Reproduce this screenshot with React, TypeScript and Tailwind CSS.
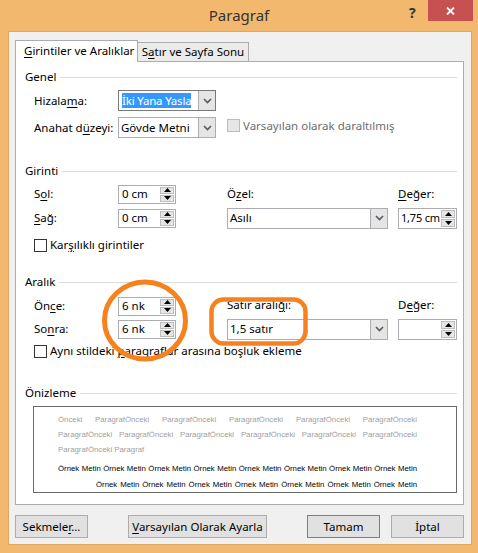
import React from "react";

const U = ({ c }: { c: string }) => (
  <span className="underline underline-offset-[2px] decoration-[1px]">{c}</span>
);

const Tri = ({ up }: { up?: boolean }) => (
  <svg width="7" height="4" viewBox="0 0 7 4">
    {up ? <path d="M0 4 L3.5 0 L7 4 Z" fill="#000" /> : <path d="M0 0 L3.5 4 L7 0 Z" fill="#000" />}
  </svg>
);

const Spin = ({ value, tall }: { value: string; tall?: boolean }) => (
  <div
    className={
      tall
        ? "h-[21px] w-full bg-white border border-[#ABADB3] flex items-stretch"
        : "h-[19px] w-full bg-white border border-[#ABADB3] flex items-stretch"
    }
  >
    <div
      className={
        tall
          ? "flex-1 pl-[2px] flex items-center whitespace-nowrap overflow-hidden text-[11px] tracking-[-0.2px]"
          : "flex-1 pl-[3px] flex items-center whitespace-nowrap overflow-hidden"
      }
    >
      {value}
    </div>
    <div className="w-[16px] flex flex-col gap-px p-px">
      <div className="flex-1 bg-[#E6E6E6] border border-[#BDBDBD] flex items-center justify-center">
        <Tri up />
      </div>
      <div className="flex-1 bg-[#E6E6E6] border border-[#BDBDBD] flex items-center justify-center">
        <Tri />
      </div>
    </div>
  </div>
);

const Chevron = () => (
  <svg width="9" height="6" viewBox="0 0 9 6">
    <path d="M1 1 L4.5 4.5 L8 1" stroke="#5A5A5A" strokeWidth="1.6" fill="none" />
  </svg>
);

const Select = ({ children, dark }: { children: React.ReactNode; dark?: boolean }) => (
  <div
    className={
      dark
        ? "h-[21px] w-full bg-white border border-[#7A7A7A] flex items-stretch"
        : "h-[21px] w-full bg-white border border-[#ABADB3] flex items-stretch"
    }
  >
    <div className="flex-1 pl-[2px] flex items-center whitespace-nowrap overflow-hidden">{children}</div>
    <div className="w-[17px] bg-[#E5E5E5] border-l border-[#ABADB3] flex items-center justify-center">
      <Chevron />
    </div>
  </div>
);

const Heading = ({ children, cls }: { children: React.ReactNode; cls: string }) => (
  <div className={"flex items-center h-[16px] " + cls}>
    <span>{children}</span>
    <div className="flex-1 h-px bg-[#DCDCDC] ml-[4px]" />
  </div>
);

const Check = ({ disabled }: { disabled?: boolean }) => (
  <div
    className={
      disabled
        ? "w-[13px] h-[13px] bg-[#E6E6E6] border border-[#BCBCBC] shrink-0"
        : "w-[13px] h-[13px] bg-white border border-[#333333] shrink-0"
    }
  />
);

const Btn = ({ children, w, def }: { children: React.ReactNode; w: string; def?: boolean }) => (
  <div
    className={
      (def ? "border-[#3C8CE0] " : "border-[#ADADAD] ") +
      w +
      " h-[23px] bg-[#E1E1E1] border flex items-center justify-center whitespace-nowrap"
    }
  >
    {children}
  </div>
);

export default function App() {
  const grey1 = "Önceki ParagrafÖnceki ParagrafÖnceki ParagrafÖnceki ParagrafÖnceki ParagrafÖnceki";
  const grey2 = "ParagrafÖnceki ParagrafÖnceki ParagrafÖnceki ParagrafÖnceki ParagrafÖnceki ParagrafÖnceki";
  const black1 = Array(8).fill("Örnek Metin").join(" ");
  const black2 = Array(7).fill("Örnek Metin").join(" ");

  return (
    <div className="relative w-[478px] h-[553px] bg-[#F2B96E] font-['Noto_Sans',sans-serif] text-[11.5px] leading-[16px] text-black overflow-hidden whitespace-nowrap">
      {/* title bar */}
      <div className="relative h-[31px] flex items-center justify-center">
        <span className="text-[15px] text-[#333333] mt-[-1px]">Paragraf</span>
        <span className="absolute left-[409px] top-[5px] text-[14px] font-bold text-[#333333]">?</span>
        <div className="absolute right-[5px] top-0 w-[45px] h-[21px] bg-[#C75050] flex items-center justify-center">
          <svg width="9" height="8" viewBox="0 0 9 8">
            <path d="M1 0.5 L8 7.5 M8 0.5 L1 7.5" stroke="#fff" strokeWidth="1.8" />
          </svg>
        </div>
      </div>

      {/* client */}
      <div className="ml-[8px] w-[464px] h-[514px] bg-[#F0F0F0] border border-[#DDA862] pl-[6px] pt-[7px]">
        {/* tabs */}
        <div className="flex items-end h-[22px]">
          <div className="relative z-10 w-[123px] h-[22px] -mb-px bg-white border border-b-0 border-[#ACACAC] flex items-center pl-[8px] pb-[1px]">
            <span>
              <U c="G" />
              irintiler ve Aralıklar
            </span>
          </div>
          <div className="w-[111px] h-[19px] bg-[#EBEBEB] border border-l-0 border-b-0 border-[#ACACAC] flex items-center justify-center">
            <span>
              S<U c="a" />
              tır ve Sayfa Sonu
            </span>
          </div>
        </div>

        {/* panel */}
        <div className="w-[449px] h-[444px] bg-white border border-[#ACACAC] pl-[9px] pr-[6px] pt-px">
          <Heading cls="mt-[6px]">Genel</Heading>

          <div className="flex items-center h-[21px] mt-[5px] pl-[9px]">
            <div className="w-[84px]">
              Hizala<U c="m" />a:
            </div>
            <div className="w-[98px]">
              <Select dark>
                <span className="bg-[#3399FF] text-white leading-[15px] ml-[1px] tracking-[-0.2px]">İki Yana Yasla</span>
              </Select>
            </div>
          </div>

          <div className="flex items-center h-[21px] mt-[6px] pl-[9px]">
            <div className="w-[84px]">
              Anahat d<U c="ü" />zeyi:
            </div>
            <div className="w-[98px]">
              <Select>Gövde Metni</Select>
            </div>
            <div className="ml-[11px] flex items-center gap-[3px] text-[#6D6D6D] -mt-[4px]">
              <Check disabled />
              <span>Varsayılan olarak daraltılmış</span>
            </div>
          </div>

          <Heading cls="mt-[25px]">Girinti</Heading>

          <div className="flex items-center h-[24px] mt-[3px] pl-[9px]">
            <div className="w-[84px]">
              S<U c="o" />l:
            </div>
            <div className="w-[58px]">
              <Spin value="0 cm" />
            </div>
            <div className="w-[51px]" />
            <div className="w-[161px]">
              Ö<U c="z" />el:
            </div>
            <div className="w-[10px]" />
            <div className="w-[59px]">
              <U c="D" />eğer:
            </div>
          </div>

          <div className="flex items-center h-[24px] pl-[9px]">
            <div className="w-[84px]">
              <U c="S" />ağ:
            </div>
            <div className="w-[58px]">
              <Spin value="0 cm" />
            </div>
            <div className="w-[51px]" />
            <div className="w-[161px]">
              <Select>Asılı</Select>
            </div>
            <div className="w-[10px]" />
            <div className="w-[59px]">
              <Spin value="1,75 cm" tall />
            </div>
          </div>

          <div className="flex items-center h-[14px] mt-[8px] pl-[9px] gap-[3px]">
            <Check />
            <span>
              Kar<U c="ş" />ılıklı girintiler
            </span>
          </div>

          <Heading cls="mt-[22px]">Aralık</Heading>

          <div className="flex items-center h-[24px] mt-[4px] pl-[9px]">
            <div className="w-[84px]">
              Ön<U c="c" />e:
            </div>
            <div className="w-[58px]">
              <Spin value="6 nk" />
            </div>
            <div className="w-[51px]" />
            <div className="w-[161px] -mt-[3px]">
              Satır aralı<U c="ğ" />ı:
            </div>
            <div className="w-[10px]" />
            <div className="w-[59px] -mt-[3px]">
              D<U c="e" />ğer:
            </div>
          </div>

          <div className="flex items-center h-[22px] pl-[9px]">
            <div className="w-[84px]">
              So<U c="n" />ra:
            </div>
            <div className="w-[58px]">
              <Spin value="6 nk" />
            </div>
            <div className="w-[51px]" />
            <div className="w-[161px]">
              <Select>1,5 satır</Select>
            </div>
            <div className="w-[10px]" />
            <div className="w-[59px]">
              <Spin value="" tall />
            </div>
          </div>

          <div className="flex items-center h-[14px] mt-[4px] pl-[9px] gap-[3px]">
            <Check />
            <span>
              Aynı stildeki <U c="p" />aragraflar arasına boşluk ekleme
            </span>
          </div>

          <Heading cls="mt-[27px]">Önizleme</Heading>

          <div className="ml-[8px] mt-[5px] w-[424px] h-[87px] border border-[#6A6A6A] pl-[24px] pt-[5px] font-['Liberation_Sans',sans-serif] text-[7.8px]">
            <div className="w-[359px] text-[#A0A0A0] leading-[15px] h-[15px] text-justify [text-align-last:justify] whitespace-nowrap">
              {grey1}
            </div>
            <div className="w-[359px] text-[#A0A0A0] leading-[15px] h-[15px] text-justify [text-align-last:justify] whitespace-nowrap">
              {grey2}
            </div>
            <div className="w-[359px] text-[#A0A0A0] leading-[15px] h-[15px]">ParagrafÖnceki Paragraf</div>
            <div className="w-[359px] mt-[4px] leading-[16px] h-[16px] text-justify [text-align-last:justify] whitespace-nowrap">
              {black1}
            </div>
            <div className="w-[321px] ml-[38px] leading-[16px] h-[16px] text-justify [text-align-last:justify] whitespace-nowrap">
              {black2}
            </div>
          </div>
        </div>

        {/* buttons */}
        <div className="flex mt-[10px]">
          <Btn w="w-[73px]">
            <span>
              Sekmele<U c="r" />...
            </span>
          </Btn>
          <div className="w-[40px]" />
          <Btn w="w-[139px]">
            <span>
              <U c="V" />arsayılan Olarak Ayarla
            </span>
          </Btn>
          <div className="w-[40px]" />
          <Btn w="w-[73px]" def>
            Tamam
          </Btn>
          <div className="w-[11px]" />
          <Btn w="w-[73px]">İptal</Btn>
        </div>
      </div>

      {/* orange annotations */}
      <svg className="absolute left-0 top-0 pointer-events-none" width="478" height="553">
        <ellipse cx="145" cy="320.5" rx="40.5" ry="38.5" stroke="#F5821F" strokeWidth="5" fill="none" />
        <rect x="211.5" y="299.5" width="94" height="44" rx="12" stroke="#F5821F" strokeWidth="4.5" fill="none" />
      </svg>
    </div>
  );
}
